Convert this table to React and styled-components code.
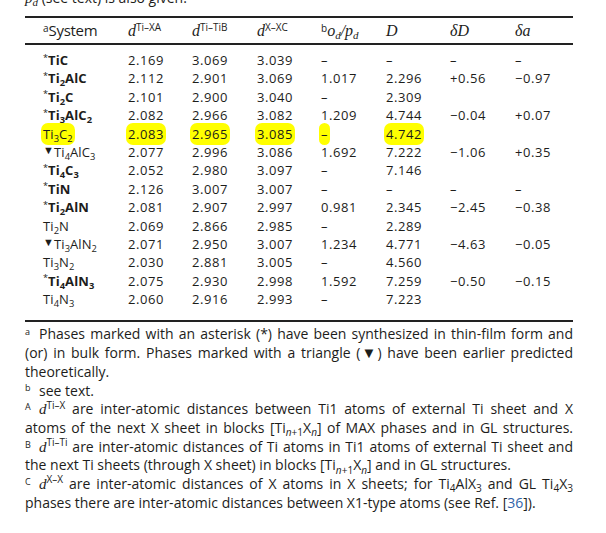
import styled, { createGlobalStyle } from "styled-components";

const GlobalStyle = createGlobalStyle`
  html, body {
    margin: 0;
    padding: 0;
    background: #ffffff;
  }
  body {
    font-family: "Open Sans", "Noto Sans", sans-serif;
    color: #1d1d1b;
    overflow: hidden;
  }
`;

const COLS = "85px 64px 65px 64px 65px 64px 65px 1fr";
const RULE = "2px solid #222";

const Page = styled.div`
  width: 548px;
  padding-left: 25px;
`;

const Caption = styled.p`
  margin: -11px 0 9px;
  height: 18px;
  font-size: 14px;
  line-height: 18px;
`;

const Ital = styled.i`
  font-family: "Liberation Serif", "Times New Roman", serif;
  font-size: ${(p) => p.$size || 16}px;
  font-style: italic;
  letter-spacing: 0;
  word-spacing: 0;
`;

const Sup = styled.span`
  position: relative;
  top: ${(p) => p.$top || -0.55}em;
  font-size: ${(p) => p.$size || 10}px;
  font-style: normal;
  font-weight: 400;
  letter-spacing: 0;
`;

const Sub = styled.span`
  position: relative;
  top: 0.32em;
  font-size: 0.72em;
  letter-spacing: 0;
`;

const Table = styled.div`
  border-top: ${RULE};
  border-bottom: ${RULE};
`;

const HeadRow = styled.div`
  display: grid;
  grid-template-columns: ${COLS};
  padding-left: 18px;
  height: 25px;
  line-height: 25px;
  font-size: 15px;
  border-bottom: ${RULE};
`;

const HeadCell = styled.div`
  white-space: nowrap;
  letter-spacing: -0.3px;
`;

const Body = styled.div`
  padding: 6px 0 12px;
`;

const Row = styled.div`
  display: grid;
  grid-template-columns: ${COLS};
  padding-left: 18px;
  height: 18.4px;
  line-height: 18.4px;
  font-size: 13px;
`;

const Cell = styled.div`
  white-space: nowrap;
  letter-spacing: 0.6px;
`;

const Name = styled.span`
  font-weight: ${(p) => (p.$bold ? 700 : 400)};
  letter-spacing: 0.1px;
`;

const Marker = styled.span`
  position: relative;
  top: ${(p) => (p.$tri ? -0.3 : -0.5)}em;
  font-size: ${(p) => (p.$tri ? 11 : 9)}px;
  font-weight: 400;
`;

const Highlight = styled.span`
  background: #ffff00;
  border-radius: 7px;
  padding: 2px 2px;
  margin-left: -2px;
`;

const Notes = styled.div`
  margin-top: 3px;
  font-size: 14px;
  line-height: 18.7px;
`;

const Line = styled.div`
  height: 18.7px;
  white-space: nowrap;
  word-spacing: ${(p) => (p.$tight ? -1.5 : 0)}px;
  text-align: ${(p) => (p.$justify ? "justify" : "left")};
  text-align-last: ${(p) => (p.$justify ? "justify" : "left")};
  padding-left: ${(p) => (p.$indent ? 14 : 0)}px;
`;

const NoteMark = styled.span`
  display: inline-block;
  width: 14px;
  margin-left: -14px;
  text-align: left;
  position: relative;
  top: -0.45em;
  font-size: 9px;
  line-height: 1;
`;

const Tri = styled.span`
  font-size: 15px;
  line-height: 1;
  margin: 0 -1px;
`;

const LinkRef = styled.span`
  color: #2f62a8;
`;

function Formula({ text }) {
  return text
    .split(/(\d+)/)
    .map((part, i) => (/^\d+$/.test(part) ? <Sub key={i}>{part}</Sub> : part));
}

const rows = [
  { name: "TiC", mark: "*", bold: true, vals: ["2.169", "3.069", "3.039", "–", "–", "–", "–"] },
  { name: "Ti2AlC", mark: "*", bold: true, vals: ["2.112", "2.901", "3.069", "1.017", "2.296", "+0.56", "−0.97"] },
  { name: "Ti2C", mark: "*", bold: true, vals: ["2.101", "2.900", "3.040", "–", "2.309", "", ""] },
  { name: "Ti3AlC2", mark: "*", bold: true, vals: ["2.082", "2.966", "3.082", "1.209", "4.744", "−0.04", "+0.07"] },
  { name: "Ti3C2", hl: true, vals: ["2.083", "2.965", "3.085", "–", "4.742", "", ""] },
  { name: "Ti4AlC3", mark: "▼", vals: ["2.077", "2.996", "3.086", "1.692", "7.222", "−1.06", "+0.35"] },
  { name: "Ti4C3", mark: "*", bold: true, vals: ["2.052", "2.980", "3.097", "–", "7.146", "", ""] },
  { name: "TiN", mark: "*", bold: true, vals: ["2.126", "3.007", "3.007", "–", "–", "–", "–"] },
  { name: "Ti2AlN", mark: "*", bold: true, vals: ["2.081", "2.907", "2.997", "0.981", "2.345", "−2.45", "−0.38"] },
  { name: "Ti2N", vals: ["2.069", "2.866", "2.985", "–", "2.289", "", ""] },
  { name: "Ti3AlN2", mark: "▼", vals: ["2.071", "2.950", "3.007", "1.234", "4.771", "−4.63", "−0.05"] },
  { name: "Ti3N2", vals: ["2.030", "2.881", "3.005", "–", "4.560", "", ""] },
  { name: "Ti4AlN3", mark: "*", bold: true, vals: ["2.075", "2.930", "2.998", "1.592", "7.259", "−0.50", "−0.15"] },
  { name: "Ti4N3", vals: ["2.060", "2.916", "2.993", "–", "7.223", "", ""] },
];

function TiBlock() {
  return (
    <>
      [Ti<Sub><i>n</i>+1</Sub>X<Sub><i>n</i></Sub>]
    </>
  );
}

function DataRow({ row }) {
  const name = (
    <Name $bold={row.bold}>
      {row.mark && <Marker $tri={row.mark === "▼"}>{row.mark}</Marker>}
      <Formula text={row.name} />
    </Name>
  );
  // the marked row carries the yellow highlight on every filled cell
  return (
    <Row>
      <Cell>{row.hl ? <Highlight>{name}</Highlight> : name}</Cell>
      {row.vals.map((v, i) => (
        <Cell key={i}>{row.hl && v ? <Highlight>{v}</Highlight> : v}</Cell>
      ))}
    </Row>
  );
}

export default function App() {
  return (
    <Page>
      <GlobalStyle />
      <Caption>
        <Ital $size={15}>p</Ital>
        <Sub>
          <Ital $size={11}>d</Ital>
        </Sub>{" "}
        (see text) is also given.
      </Caption>

      <Table>
        <HeadRow>
          <HeadCell>
            <Sup $size={10} $top={-0.45}>a</Sup>System
          </HeadCell>
          <HeadCell>
            <Ital>d</Ital>
            <Sup>Ti–XA</Sup>
          </HeadCell>
          <HeadCell>
            <Ital>d</Ital>
            <Sup>Ti–TiB</Sup>
          </HeadCell>
          <HeadCell>
            <Ital>d</Ital>
            <Sup>X–XC</Sup>
          </HeadCell>
          <HeadCell>
            <Sup $top={-0.45}>b</Sup>
            <Ital>o</Ital>
            <Sub>
              <Ital $size={11}>d</Ital>
            </Sub>
            <Ital>/p</Ital>
            <Sub>
              <Ital $size={11}>d</Ital>
            </Sub>
          </HeadCell>
          <HeadCell>
            <Ital>D</Ital>
          </HeadCell>
          <HeadCell>
            <Ital>δD</Ital>
          </HeadCell>
          <HeadCell>
            <Ital>δa</Ital>
          </HeadCell>
        </HeadRow>
        <Body>
          {rows.map((row) => (
            <DataRow key={row.name} row={row} />
          ))}
        </Body>
      </Table>

      <Notes>
        <Line $indent $justify>
          <NoteMark>a</NoteMark>Phases marked with an asterisk (*) have been synthesized in thin-film form and
        </Line>
        <Line $justify>
          (or) in bulk form. Phases marked with a triangle (<Tri>▼</Tri>) have been earlier predicted
        </Line>
        <Line>theoretically.</Line>
        <Line $indent>
          <NoteMark>b</NoteMark>see text.
        </Line>
        <Line $indent $justify>
          <NoteMark>A</NoteMark>
          <Ital $size={15}>d</Ital>
          <Sup>Ti–X</Sup> are inter-atomic distances between Ti1 atoms of external Ti sheet and X
        </Line>
        <Line $justify $tight>
          atoms of the next X sheet in blocks <TiBlock /> of MAX phases and in GL structures.
        </Line>
        <Line $indent $justify $tight>
          <NoteMark>B</NoteMark>
          <Ital $size={15}>d</Ital>
          <Sup>Ti–Ti</Sup> are inter-atomic distances of Ti atoms in Ti1 atoms of external Ti sheet and
        </Line>
        <Line>
          the next Ti sheets (through X sheet) in blocks <TiBlock /> and in GL structures.
        </Line>
        <Line $indent $justify $tight>
          <NoteMark>C</NoteMark>
          <Ital $size={15}>d</Ital>
          <Sup>X–X</Sup> are inter-atomic distances of X atoms in X sheets; for Ti<Sub>4</Sub>AlX<Sub>3</Sub> and GL Ti
          <Sub>4</Sub>X<Sub>3</Sub>
        </Line>
        <Line>
          phases there are inter-atomic distances between X1-type atoms (see Ref. [<LinkRef>36</LinkRef>]).
        </Line>
      </Notes>
    </Page>
  );
}
